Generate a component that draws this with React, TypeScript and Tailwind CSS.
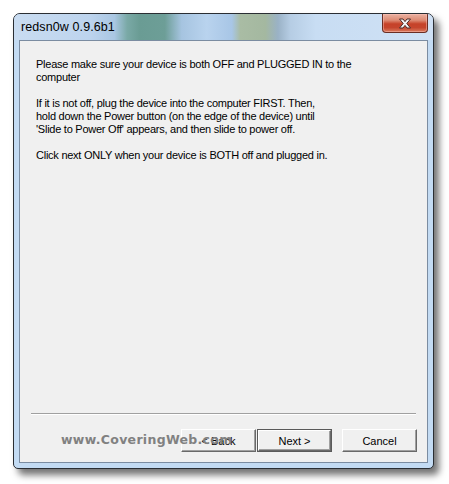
import React from 'react';

const paragraphs = [
  ['Please make sure your device is both OFF and PLUGGED IN to the', 'computer'],
  [
    'If it is not off, plug the device into the computer FIRST. Then,',
    'hold down the Power button (on the edge of the device) until',
    "'Slide to Power Off' appears, and then slide to power off.",
  ],
  ['Click next ONLY when your device is BOTH off and plugged in.'],
];

function CloseGlyph() {
  return (
    <svg width="14" height="11" viewBox="0 0 14 11">
      <path
        d="M1.5 1 L5 1 L7 3.6 L9 1 L12.5 1 L8.8 5.5 L12.5 10 L9 10 L7 7.4 L5 10 L1.5 10 L5.2 5.5 Z"
        fill="#f4f4f4"
        stroke="#4a2a26"
        strokeWidth="1"
        strokeLinejoin="round"
      />
    </svg>
  );
}

function WinButton({ label, isDefault }: { label: string; isDefault?: boolean }) {
  return (
    <div
      className={
        isDefault
          ? 'w-[75px] h-[23px] border border-[#5a5a5a] bg-[#f0f0f0]'
          : 'w-[75px] h-[23px] bg-[#f0f0f0]'
      }
    >
      <div className="h-full flex items-center justify-center pt-px border-t border-l border-white border-b border-r border-b-[#696969] border-r-[#696969] shadow-[inset_-1px_-1px_0_#a0a0a0] text-[11px] text-black">
        {label}
      </div>
    </div>
  );
}

export default function App() {
  return (
    <div
      className="w-[449px] h-[484px] bg-white pl-[13px] pt-[13px] relative overflow-hidden"
      style={{ fontFamily: '"Liberation Sans", Arial, sans-serif' }}
    >
      <div className="w-[421px] h-[456px] border border-[#2a2e33] rounded-t-[7px] rounded-b-[5px] bg-[#c3dbf3] shadow-[5px_6px_7px_rgba(0,0,0,0.55)] flex flex-col overflow-hidden">
        {/* title bar */}
        <div className="h-[26px] flex items-start justify-between bg-[linear-gradient(90deg,#c9dcf1_0%,#bdd4ee_18%,#a9c6e2_24%,#7aa9a6_27%,#6a9c94_30%,#6d9e97_36%,#a6c4e0_40%,#b9d3ee_46%,#a8c6e6_52%,#a9bca4_54%,#a4b8a0_60%,#9ab2c6_63%,#b6cde4_66%,#c8ddf3_72%,#cfe1f5_100%)]">
          <div className="pl-[7px] pt-[6px] text-[12.5px] leading-[14px] text-black tracking-[0.1px]">
            redsn0w 0.9.6b1
          </div>
          <div className="mr-[5px] w-[46px] h-[19px] rounded-b-[4px] border border-t-0 border-[#6a2e24] bg-[linear-gradient(180deg,#eab2a2_0%,#dd8a73_35%,#c64229_55%,#c5452d_75%,#da7b5e_100%)] flex items-center justify-center shadow-[inset_0_0_0_1px_rgba(255,200,190,0.45)]">
            <CloseGlyph />
          </div>
        </div>
        {/* client area */}
        <div className="ml-[5px] w-[409px] h-[423px] border border-[#7b8ca1] bg-[#f0f0f0] flex flex-col">
          <div className="pl-[16px] pt-[17px] text-[11px] leading-[13px] tracking-[-0.25px] text-black">
            {paragraphs.map((lines, i) => (
              <div key={i} className={i > 0 ? 'mt-[13px]' : ''}>
                {lines.map((line) => (
                  <div key={line} className="whitespace-nowrap">
                    {line}
                  </div>
                ))}
              </div>
            ))}
          </div>
          <div className="mt-auto mx-[11px] border-t border-[#a0a0a0] border-b border-b-white" />
          <div className="flex justify-end pr-[10px] pt-[14px] pb-[10px]">
            <WinButton label="< Back" />
            <div className="ml-px">
              <WinButton label="Next >" isDefault />
            </div>
            <div className="ml-[10px]">
              <WinButton label="Cancel" />
            </div>
          </div>
        </div>
      </div>
      <div
        className="absolute left-[61px] top-[432px] text-[12.5px] leading-[16px] font-bold text-[#818181] tracking-[0.3px]"
        style={{ fontFamily: '"DejaVu Sans", Verdana, sans-serif' }}
      >
        www.CoveringWeb.com
      </div>
    </div>
  );
}
